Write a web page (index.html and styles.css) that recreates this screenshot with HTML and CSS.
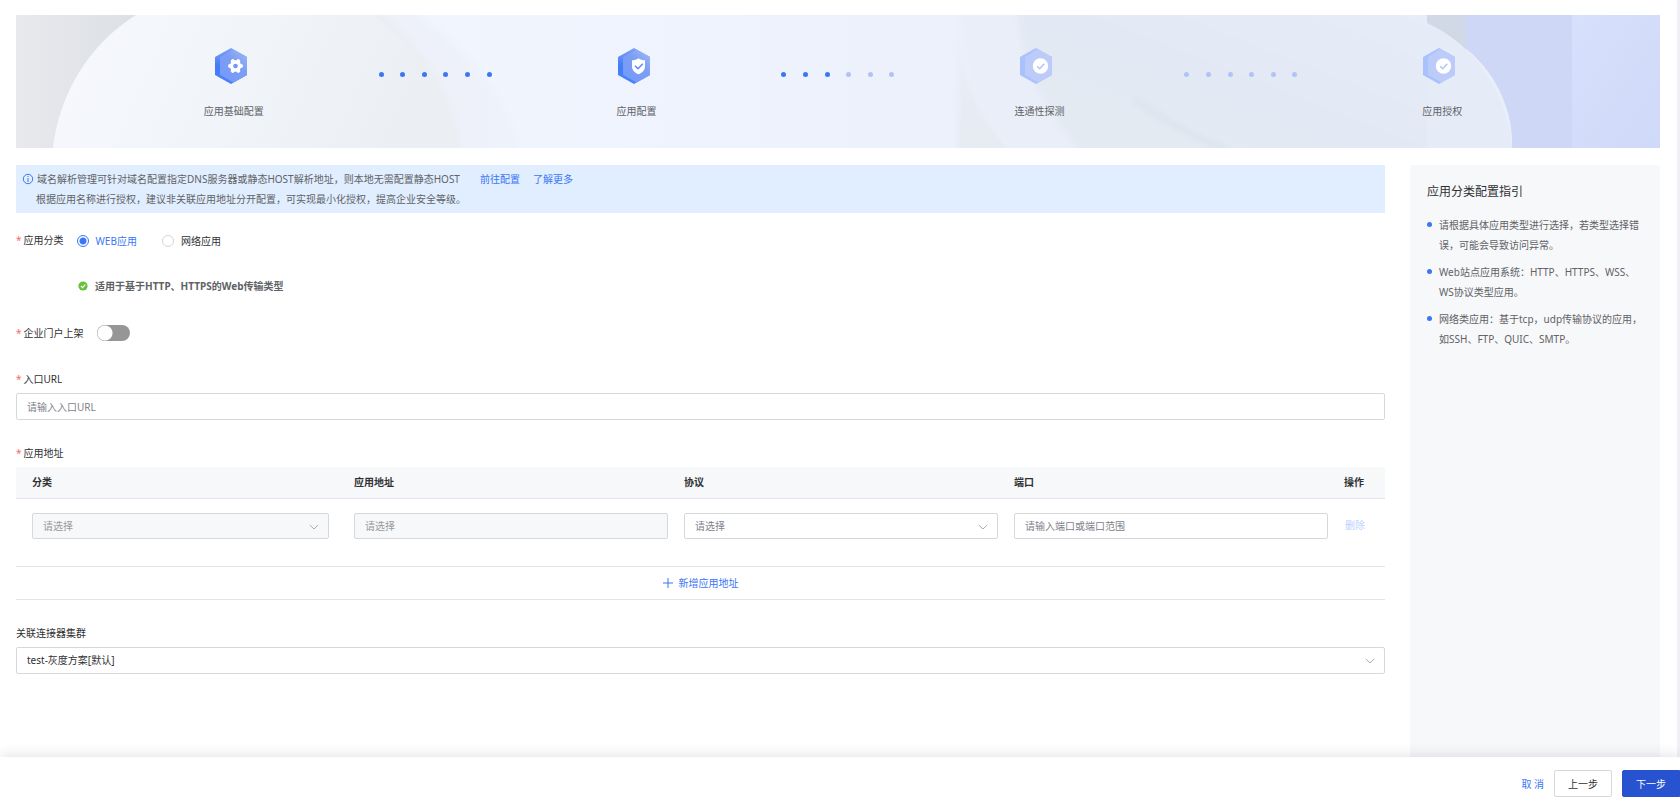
FILE: index.html
```html
<!DOCTYPE html>
<html lang="zh-CN">
<head>
<meta charset="utf-8">
<title>应用配置</title>
<link rel="stylesheet" href="styles.css">
</head>
<body>
<svg class="defs" aria-hidden="true">
  <defs>
    <linearGradient id="hexBack" x1="0" y1="0" x2="0" y2="1"><stop offset="0" stop-color="#7fa2f6"/><stop offset=".5" stop-color="#437af7"/><stop offset="1" stop-color="#4a82fb"/></linearGradient>
    <linearGradient id="hexFront" x1="1" y1="0" x2="0.2" y2="1"><stop offset="0" stop-color="#a3baf6"/><stop offset=".45" stop-color="#7c9ef3"/><stop offset="1" stop-color="#749afb"/></linearGradient>
    <symbol id="hex" viewBox="0 0 32 36">
      <path fill="url(#hexBack)" d="M16 0 32 9v18L16 36 0 27V9z"/>
      <path fill="url(#hexFront)" d="M18.500 1.500 32 9v18L18.500 34.500 5 27V9z"/>
    </symbol>
    <symbol id="hex-pale" viewBox="0 0 32 36">
      <path fill="#a9c1fd" d="M16 0 32 9v18L16 36 0 27V9z"/>
      <path fill="#bccbf9" d="M17.500 .8 32 9v18L18.500 34.500 5 27V9z"/>
      <circle cx="20.500" cy="18" r="7.700" fill="#fff"/>
      <path d="M17.200 18.200l2.500 2.500 4.600-5" fill="none" stroke="#afc4fb" stroke-width="1.500"/>
    </symbol>
  </defs>
</svg>

<main class="main">
  <section class="banner">
    <svg class="banner-art" viewBox="0 0 1644 133" preserveAspectRatio="none" aria-hidden="true">
      <defs>
        <linearGradient id="base" x1="0" x2="1" y1="0" y2="0"><stop offset=".25" stop-color="#f1f5fe"/><stop offset=".55" stop-color="#ecf1fc"/><stop offset="1" stop-color="#e9eefa"/></linearGradient>
        <linearGradient id="gray" x1="0" x2="1" y1="0" y2="0"><stop offset="0" stop-color="#e7e9ed"/><stop offset="1" stop-color="#dcdfe3"/></linearGradient>
        <linearGradient id="disc" x1="0" x2="1" y1="0" y2=".15"><stop offset="0" stop-color="#f7f9fe"/><stop offset=".5" stop-color="#f1f4f9"/><stop offset="1" stop-color="#ebeef2"/></linearGradient>
        <linearGradient id="ring" x1="0" x2="1" y1="0" y2="0"><stop offset="0" stop-color="#edf0f4"/><stop offset="1" stop-color="#eef2fb"/></linearGradient>
        <linearGradient id="right" x1="0" x2="1" y1="1" y2="0"><stop offset="0" stop-color="#e3eaf1"/><stop offset=".5" stop-color="#e2e9f4"/><stop offset="1" stop-color="#e7edf9"/></linearGradient>
        <linearGradient id="edge" x1="0" x2="0" y1="0" y2="1"><stop offset="0" stop-color="#e9eef9"/><stop offset="1" stop-color="#e6eaf1"/></linearGradient>
        <linearGradient id="far" x1="0" x2="1" y1="0" y2="1"><stop offset="0" stop-color="#d7e1fc"/><stop offset="1" stop-color="#cfd9f8"/></linearGradient>
        <filter id="soft"><feGaussianBlur stdDeviation="3"/></filter>
      </defs>
      <rect width="1644" height="133" fill="url(#base)"/>
      <path d="M60-20H375C450 30 500 80 505 153H60z" fill="url(#ring)" filter="url(#soft)"/>
      <path d="M200-20H345C410 30 442 80 448 153H200z" fill="#ebeef2" filter="url(#soft)"/>
      <rect width="130" height="133" fill="url(#gray)"/>
      <path d="M120 0H355C405 30 430 80 436 133H37C43 80 72 30 120 0z" fill="url(#disc)"/>
      <path d="M942-20C942 60 960 100 1010 153H942z" fill="url(#edge)" filter="url(#soft)"/>
      <path d="M944-20C944 60 962 100 1012 153H1440V-20z" fill="#e9eef8" filter="url(#soft)"/>
      <path d="M1001-20C1002 50 1030 100 1080 153H1440V-20z" fill="url(#right)" filter="url(#soft)"/>
      <path d="M1118 84Q1160 114 1215 137" fill="none" stroke="#dce3ed" stroke-width="6" filter="url(#soft)"/>
      <path d="M1411 0h39v45l-39-30z" fill="#d2d9e6"/>
      <path d="M1449 0h107v133h-60C1498 95 1478 55 1449 33z" fill="#ced7f6"/>
      <rect x="1556" width="88" height="133" fill="url(#far)"/>
      <path d="M1411 8C1460 30 1492 80 1496 133H1411z" fill="#e5ecf8"/>
    </svg>
    <ol class="steps">
      <li class="step">
        <svg class="step-icon" viewBox="0 0 32 36" aria-hidden="true"><use href="#hex"/>
          <circle cx="20.500" cy="18" r="3.900" fill="none" stroke="#fff" stroke-width="3.600"/>
          <g stroke="#fff" stroke-width="4" stroke-linecap="round"><path d="M15 18h.8M25.200 18h.8M17.700 13.200l.4.700M22.900 22.100l.4.700M23.300 13.200l-.4.700M18.100 22.100l-.4.700"/></g>
          <circle cx="20.500" cy="18" r="2.200" fill="#7598f2"/>
        </svg>
        <span class="step-name">应用基础配置</span>
      </li>
      <li class="dots"><i class="on"></i><i class="on"></i><i class="on"></i><i class="on"></i><i class="on"></i><i class="on"></i></li>
      <li class="step">
        <svg class="step-icon" viewBox="0 0 32 36" aria-hidden="true"><use href="#hex"/>
          <path d="M20.500 10.200c2 1.500 4.400 2 6.500 2v6c0 4-3 6.600-6.500 8-3.500-1.400-6.500-4-6.500-8v-6c2.100 0 4.500-.5 6.500-2z" fill="#fff"/>
          <path d="M17 17.700l3 3 4.800-5" fill="none" stroke="#5f8bf5" stroke-width="1.600"/>
        </svg>
        <span class="step-name">应用配置</span>
      </li>
      <li class="dots"><i class="on"></i><i class="on"></i><i class="on"></i><i></i><i></i><i></i></li>
      <li class="step">
        <svg class="step-icon" viewBox="0 0 32 36" aria-hidden="true"><use href="#hex-pale"/></svg>
        <span class="step-name">连通性探测</span>
      </li>
      <li class="dots"><i></i><i></i><i></i><i></i><i></i><i></i></li>
      <li class="step">
        <svg class="step-icon" viewBox="0 0 32 36" aria-hidden="true"><use href="#hex-pale"/></svg>
        <span class="step-name">应用授权</span>
      </li>
    </ol>
  </section>

  <div class="content">
    <form class="form" id="app-form">
      <div class="alert">
        <svg class="alert-icon" viewBox="0 0 12 12" aria-hidden="true"><circle cx="6" cy="6" r="4.700" fill="none" stroke="#3b76f6"/><path d="M6 5v4M6 3v1" stroke="#3b76f6"/></svg>
        <div class="alert-body">
          <p>域名解析管理可针对域名配置指定DNS服务器或静态HOST解析地址，则本地无需配置静态HOST<a class="alert-link first" href="#config">前往配置</a><a class="alert-link" href="#more">了解更多</a></p>
          <p>根据应用名称进行授权，建议非关联应用地址分开配置，可实现最小化授权，提高企业安全等级。</p>
        </div>
      </div>

      <div class="field type-row">
        <span class="label required" id="type-label">应用分类</span>
        <div role="radiogroup" aria-labelledby="type-label" class="radios">
          <label class="radio"><input type="radio" name="type" checked><span>WEB应用</span></label>
          <label class="radio"><input type="radio" name="type"><span>网络应用</span></label>
        </div>
      </div>
      <p class="hint">
        <svg class="hint-icon" viewBox="0 0 10 10" aria-hidden="true"><circle cx="5" cy="5" r="4.600" fill="#67c23a"/><path d="M2.900 5l1.600 1.600 2.800-3" fill="none" stroke="#fff" stroke-width="1.100"/></svg>
        适用于基于HTTP、HTTPS的Web传输类型
      </p>

      <div class="field portal-row">
        <label class="label required" for="portal">企业门户上架</label>
        <input class="switch" type="checkbox" role="switch" id="portal">
      </div>

      <div class="field stacked">
        <label class="label required" for="url">入口URL</label>
        <input class="control" id="url" type="text" placeholder="请输入入口URL">
      </div>

      <div class="field stacked">
        <span class="label required" id="addr-label">应用地址</span>
        <table class="table" aria-labelledby="addr-label">
          <thead><tr><th>分类</th><th>应用地址</th><th>协议</th><th>端口</th><th class="ops">操作</th></tr></thead>
          <tbody><tr>
            <td><span class="select"><select class="control" disabled aria-label="分类"><option>请选择</option></select><svg class="chevron" viewBox="0 0 10 10" aria-hidden="true"><path d="M.8 3l4.200 4 4.200-4"/></svg></span></td>
            <td><input class="control" type="text" disabled placeholder="请选择" aria-label="应用地址"></td>
            <td><span class="select"><select class="control empty" aria-label="协议"><option>请选择</option></select><svg class="chevron" viewBox="0 0 10 10" aria-hidden="true"><path d="M.8 3l4.200 4 4.200-4"/></svg></span></td>
            <td><input class="control" type="text" placeholder="请输入端口或端口范围" aria-label="端口"></td>
            <td class="ops"><button class="text-btn" type="button" disabled>删除</button></td>
          </tr></tbody>
        </table>
        <button class="add" type="button"><svg class="plus" viewBox="0 0 10 10" aria-hidden="true"><path d="M5 0v10M0 5h10"/></svg>新增应用地址</button>
      </div>

      <div class="field stacked">
        <label class="label" for="cluster">关联连接器集群</label>
        <span class="select"><select class="control" id="cluster"><option>test-灰度方案[默认]</option></select><svg class="chevron" viewBox="0 0 10 10" aria-hidden="true"><path d="M.8 3l4.200 4 4.200-4"/></svg></span>
      </div>
    </form>

    <aside class="guide">
      <h2>应用分类配置指引</h2>
      <ul>
        <li>请根据具体应用类型进行选择，若类型选择错误，可能会导致访问异常。</li>
        <li>Web站点应用系统：HTTP、HTTPS、WSS、WS协议类型应用。</li>
        <li>网络类应用：基于tcp，udp传输协议的应用，如SSH、FTP、QUIC、SMTP。</li>
      </ul>
    </aside>
  </div>
</main>

<footer class="footer">
  <button class="cancel" type="button">取 消</button>
  <button class="btn" type="button">上一步</button>
  <button class="btn primary" type="submit" form="app-form">下一步</button>
</footer>
</body>
</html>
```

FILE: styles.css
```css
* { box-sizing: border-box; }
body {
  margin: 0;
  min-height: 100vh;
  display: flex;
  flex-direction: column;
  background: #fff;
  color: #303133;
  font-family: "Noto Sans", "Noto Sans CJK SC", sans-serif;
  font-size: 10px;
  line-height: 20px;
}
button, input, select { font: inherit; color: inherit; margin: 0; }
button { cursor: pointer; }
p, h2, ul, ol { margin: 0; padding: 0; }
a { color: #3b76f6; text-decoration: none; }
.defs { position: absolute; width: 0; height: 0; }

.main {
  flex: 1;
  display: flex;
  flex-direction: column;
  padding: 15px 17px 0 16px;
  border-right: 3px solid #f0f1f6;
}

/* Progress banner */
.banner { position: relative; height: 133px; }
.banner-art { position: absolute; inset: 0; width: 100%; height: 100%; }
.steps {
  position: relative;
  display: grid;
  grid-template-columns: repeat(7, 1fr);
  padding: 33px 117px 0;
  list-style: none;
  color: #606266;
}
.step { display: flex; flex-direction: column; align-items: center; gap: 17px; }
.step-icon { width: 32px; height: 36px; margin-right: 6px; }
.step-name { line-height: 20px; }
.dots { display: flex; justify-content: space-between; width: 113px; margin: 0 auto; padding-top: 24px; }
.dots i { width: 5px; height: 5px; border-radius: 50%; background: #b0c3f9; }
.dots .on { background: #3b76f6; }

.content { flex: 1; display: flex; gap: 25px; padding-top: 17px; }
.form { flex: 1; min-width: 0; }

.alert { display: flex; gap: 2px; padding: 4px 6px; background: #e1eeff; color: #606266; }
.alert-icon { width: 12px; height: 12px; margin-top: 4px; }
.alert-body p:first-child { padding-left: 1px; }
.alert-link { margin-left: 13px; }
.alert-link.first { margin-left: 20px; }

/* Form fields */
.field { display: flex; }
.label { line-height: 20px; }
.required::before { content: "*"; color: #f56c6c; margin-right: 2px; }
.type-row { margin-top: 17px; gap: 13px; }
.radios { display: flex; gap: 25px; padding-top: 1px; }
.radio { display: flex; align-items: center; gap: 7px; }
.radio input {
  appearance: none;
  width: 12px;
  height: 12px;
  border: 1px solid #d3d5da;
  border-radius: 50%;
}
.radio input:checked { border-color: #3b76f6; background: radial-gradient(circle, #3b76f6 3px, #fff 4px); }
.radio input:checked + span { color: #3b76f6; }
.hint {
  display: flex;
  align-items: center;
  gap: 7px;
  margin: 25px 0 0 62px;
  color: #606266;
  font-weight: 700;
}
.hint-icon { width: 10px; height: 10px; }
.portal-row { margin-top: 27px; gap: 13px; align-items: center; }
.switch {
  appearance: none;
  width: 33px;
  height: 16px;
  border-radius: 8px;
  background: radial-gradient(circle at 8px 8px, #fff 7px, transparent 8px) #969696;
}
.stacked { flex-direction: column; margin-top: 26px; }
.stacked > .control, .stacked > .select { margin-top: 4px; }
.stacked + .stacked { margin-top: 23px; }

.control {
  appearance: none;
  display: block;
  width: 100%;
  height: 27px;
  padding: 0 10px;
  border: 1px solid #d7d8dc;
  border-radius: 2px;
  background: #fff;
  outline: 0;
}
.control::placeholder { color: #7f828c; opacity: 1; }
.control.empty { color: #7f828c; }
.control:disabled, .control:disabled::placeholder { color: #999; opacity: 1; }
.control:disabled { background: #f7f8fa; }
.select { position: relative; display: block; }
.chevron { position: absolute; right: 10px; top: 50%; width: 10px; height: 10px; margin-top: -4px; pointer-events: none; }
.chevron path { fill: none; stroke: #a8abb2; }

/* Address table */
.table { width: 100%; table-layout: fixed; border-collapse: collapse; margin-top: 4px; }
.table th { height: 31px; padding: 0 8px; background: #f7f8fa; text-align: left; font-weight: 700; border-bottom: 1px solid #e2e3ec; }
.table td { height: 68px; padding: 14px 8px; vertical-align: top; border-bottom: 1px solid #e2e3ec; }
.table .control { height: 26px; }
.table th:first-child, .table td:first-child { padding-left: 16px; padding-right: 17px; }
.table .ops { width: 49px; padding-right: 0; }
.text-btn { display: block; padding: 2px 1px; border: 0; background: none; color: #bcd3ff; }
.add {
  display: flex;
  align-items: center;
  justify-content: center;
  gap: 6px;
  height: 33px;
  border: 0;
  border-bottom: 1px solid #e2e3ec;
  background: none;
  color: #3b76f6;
}
.plus { width: 10px; height: 10px; }
.plus path { stroke: #3b76f6; }

/* Guide panel */
.guide { width: 250px; padding: 17px 15px 17px 17px; border-radius: 2px 2px 0 0; background: #f7f8fa; }
.guide h2 { font-size: 12px; line-height: 20px; font-weight: 400; }
.guide ul { list-style: none; margin-top: 13px; color: #606266; }
.guide li { position: relative; padding-left: 12px; margin-bottom: 7px; }
.guide li::before {
  content: "";
  position: absolute;
  left: 0;
  top: 7px;
  width: 5px;
  height: 5px;
  border-radius: 50%;
  background: #3b76f6;
}

.footer {
  position: relative;
  display: flex;
  align-items: center;
  justify-content: flex-end;
  gap: 10px;
  height: 44px;
  padding-top: 9px;
  background: #fff;
  box-shadow: 0 -2px 12px rgba(40, 50, 80, .13);
}
.cancel { padding: 0; border: 0; background: none; color: #3b76f6; }
.btn { height: 27px; padding: 0 13px; border: 1px solid #d7d8dc; border-radius: 2px; background: #fff; }
.primary { border-color: #2752d0; border-radius: 2px 0 0 2px; background: #2752d0; color: #fff; }
```
